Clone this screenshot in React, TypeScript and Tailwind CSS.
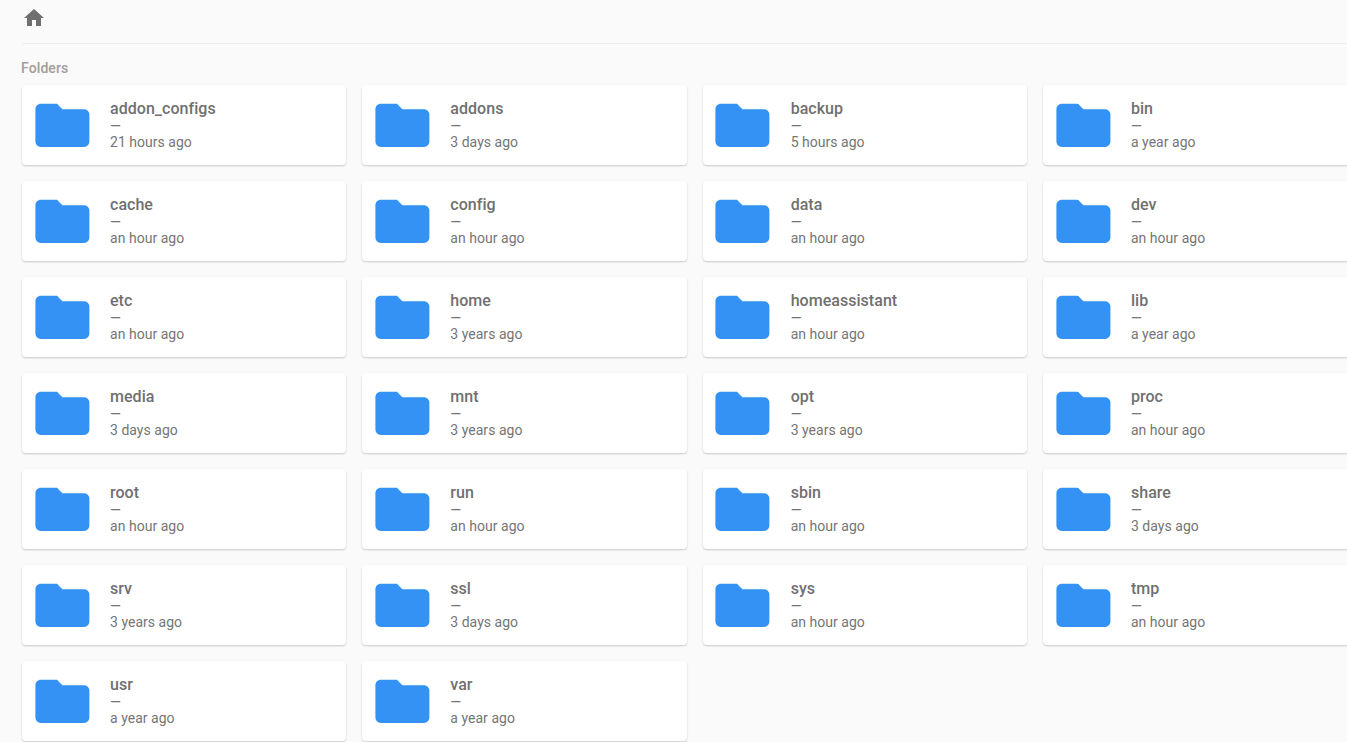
const rows: [string, string][] = [
  ["addon_configs", "21 hours ago"], ["addons", "3 days ago"], ["backup", "5 hours ago"], ["bin", "a year ago"],
  ["cache", "an hour ago"], ["config", "an hour ago"], ["data", "an hour ago"], ["dev", "an hour ago"],
  ["etc", "an hour ago"], ["home", "3 years ago"], ["homeassistant", "an hour ago"], ["lib", "a year ago"],
  ["media", "3 days ago"], ["mnt", "3 years ago"], ["opt", "3 years ago"], ["proc", "an hour ago"],
  ["root", "an hour ago"], ["run", "an hour ago"], ["sbin", "an hour ago"], ["share", "3 days ago"],
  ["srv", "3 years ago"], ["ssl", "3 days ago"], ["sys", "an hour ago"], ["tmp", "an hour ago"],
  ["usr", "a year ago"], ["var", "a year ago"],
];

function Folder() {
  return (
    <svg viewBox="0 0 24 24" className="w-[64.8px] h-[64.8px] shrink-0" fill="#3492f4" aria-hidden="true">
      <path d="M10 4H4c-1.1 0-2 .9-2 2v12c0 1.1.9 2 2 2h16c1.1 0 2-.9 2-2V8c0-1.1-.9-2-2-2h-8l-2-2z" />
    </svg>
  );
}

export default function App() {
  return (
    <div className="h-[742px] overflow-hidden bg-[#fafafa] text-[#6f6f6f] font-['Roboto',sans-serif]">
      <div className="w-[1345.3px] ml-[22px]">
        <div className="h-[44px] border-b border-[#eeeeee] flex items-start">
          <svg viewBox="0 0 24 24" className="w-[24px] h-[24px] mt-[6px]" fill="#6f6f6f" aria-hidden="true">
            <path d="M10 20v-6h4v6h5v-8h3L12 3 2 12h3v8z" />
          </svg>
        </div>
        <div className="h-[41px] flex items-center text-[14px] tracking-[0.1px] font-medium text-[#9e9e9e] -ml-px pt-[8px]">Folders</div>
        <div className="grid grid-cols-4 gap-4">
          {rows.map(([name, time]) => (
            <div key={name} className="h-[80px] bg-white rounded-[4px] shadow-[0_1px_2px_rgba(0,0,0,0.2)] flex items-center pl-[7.6px]">
              <Folder />
              <div className="ml-[15.6px] flex flex-col -mt-[2px]">
                <div className="text-[16px] leading-[24px] font-medium h-[24px] tracking-[0.04px] text-[#707070]">{name}</div>
                <div className="text-[14px] leading-[20px] h-[14px] -mt-[5px] text-[#757575]">—</div>
                <div className="text-[14px] leading-[20px] mt-[2px] text-[#757575] tracking-[0.03px]">{time}</div>
              </div>
            </div>
          ))}
        </div>
      </div>
    </div>
  );
}
